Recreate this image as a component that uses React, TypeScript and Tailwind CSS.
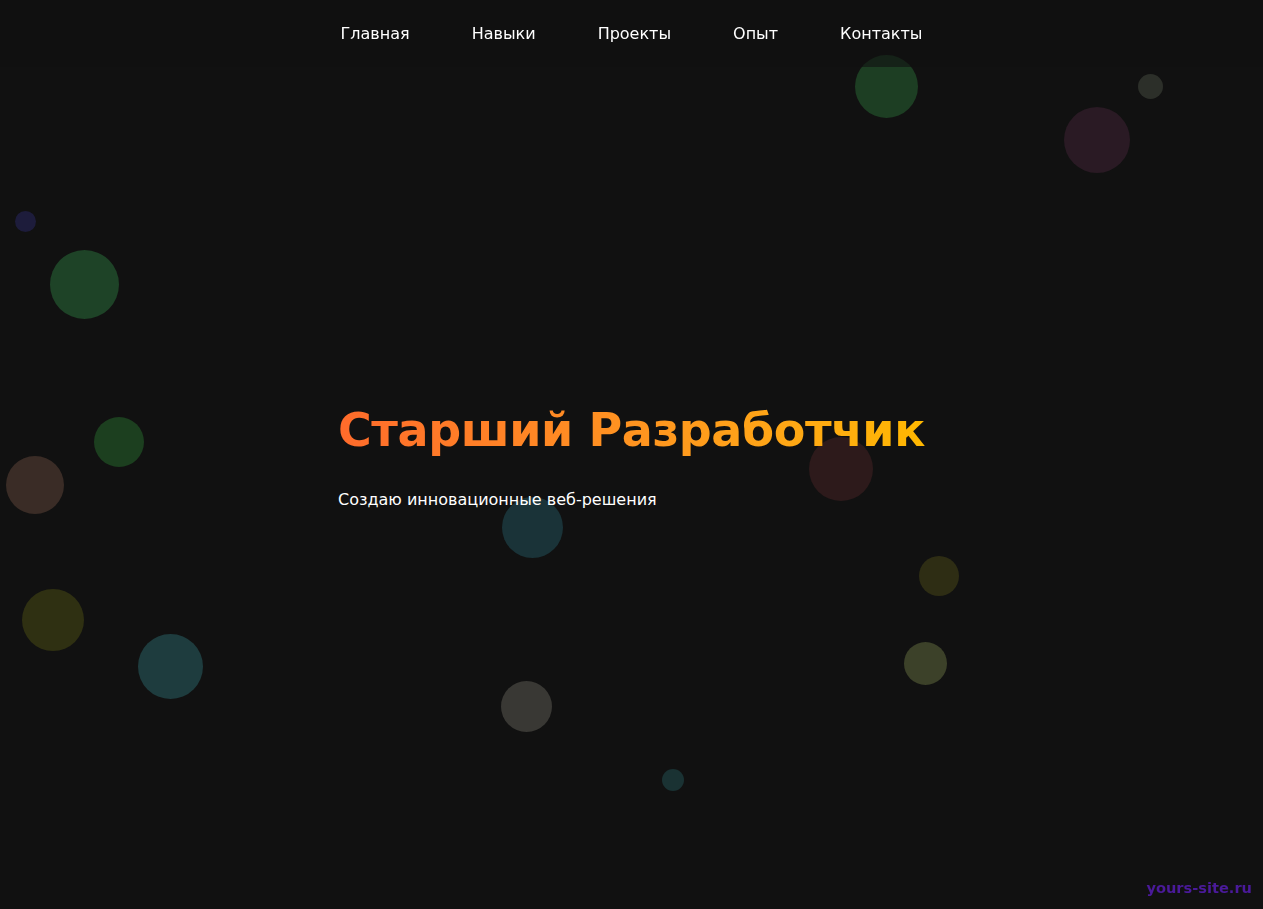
const bubbles = [
  { x: 886, y: 86, d: 63, c: "bg-[#1d3e23]" },
  { x: 1150, y: 86, d: 25, c: "bg-[#2c2f29]" },
  { x: 1097, y: 140, d: 66, c: "bg-[#2a1a24]" },
  { x: 25, y: 221, d: 21, c: "bg-[#1d1c3b]" },
  { x: 84, y: 284, d: 69, c: "bg-[#1e4327]" },
  { x: 119, y: 442, d: 50, c: "bg-[#1c3f1f]" },
  { x: 35, y: 485, d: 58, c: "bg-[#3a2c26]" },
  { x: 841, y: 469, d: 64, c: "bg-[#2d1a1b]" },
  { x: 532, y: 527, d: 61, c: "bg-[#1a3338]" },
  { x: 939, y: 576, d: 40, c: "bg-[#2e2d14]" },
  { x: 925, y: 663, d: 43, c: "bg-[#3c4129]" },
  { x: 53, y: 620, d: 62, c: "bg-[#2f3012]" },
  { x: 170, y: 666, d: 65, c: "bg-[#1e3c3e]" },
  { x: 526, y: 706, d: 51, c: "bg-[#393834]" },
  { x: 673, y: 780, d: 22, c: "bg-[#1a3233]" },
];

const links = ["Главная", "Навыки", "Проекты", "Опыт", "Контакты"];

export default function App() {
  return (
    <div className="relative min-h-screen overflow-hidden bg-[#111111] font-['DejaVu_Sans',sans-serif] text-white">
      {/* плавающие круги на фоне */}
      <div className="absolute inset-0">
        {bubbles.map((b, i) => (
          <span
            key={i}
            className={`absolute rounded-full ${b.c}`}
            style={{ left: b.x - b.d / 2, top: b.y - b.d / 2, width: b.d, height: b.d }}
          />
        ))}
      </div>

      <header className="fixed inset-x-0 top-0 z-20 bg-[#111111]/60">
        <nav className="flex h-[67px] items-center justify-center gap-[62px]">
          {links.map((l) => (
            <a key={l} href="#" className="text-[16px] leading-6 text-white">
              {l}
            </a>
          ))}
        </nav>
      </header>

      <main className="relative z-10 flex min-h-screen items-center justify-center">
        <div className="flex flex-col pt-[6px]">
          <h1 className="bg-gradient-to-r from-[#ff6b2b] to-[#ffb800] bg-clip-text text-[46px] font-bold leading-[1.2] tracking-[-0.4px] text-transparent">
            Старший Разработчик
          </h1>
          <p className="mt-[30px] text-[16px] leading-6 text-white">Создаю инновационные веб-решения</p>
        </div>
      </main>

      <div className="fixed bottom-[10px] right-[11px] z-30 text-[14.6px] font-bold text-[#4a1a9a]">
        yours-site.ru
      </div>
    </div>
  );
}
